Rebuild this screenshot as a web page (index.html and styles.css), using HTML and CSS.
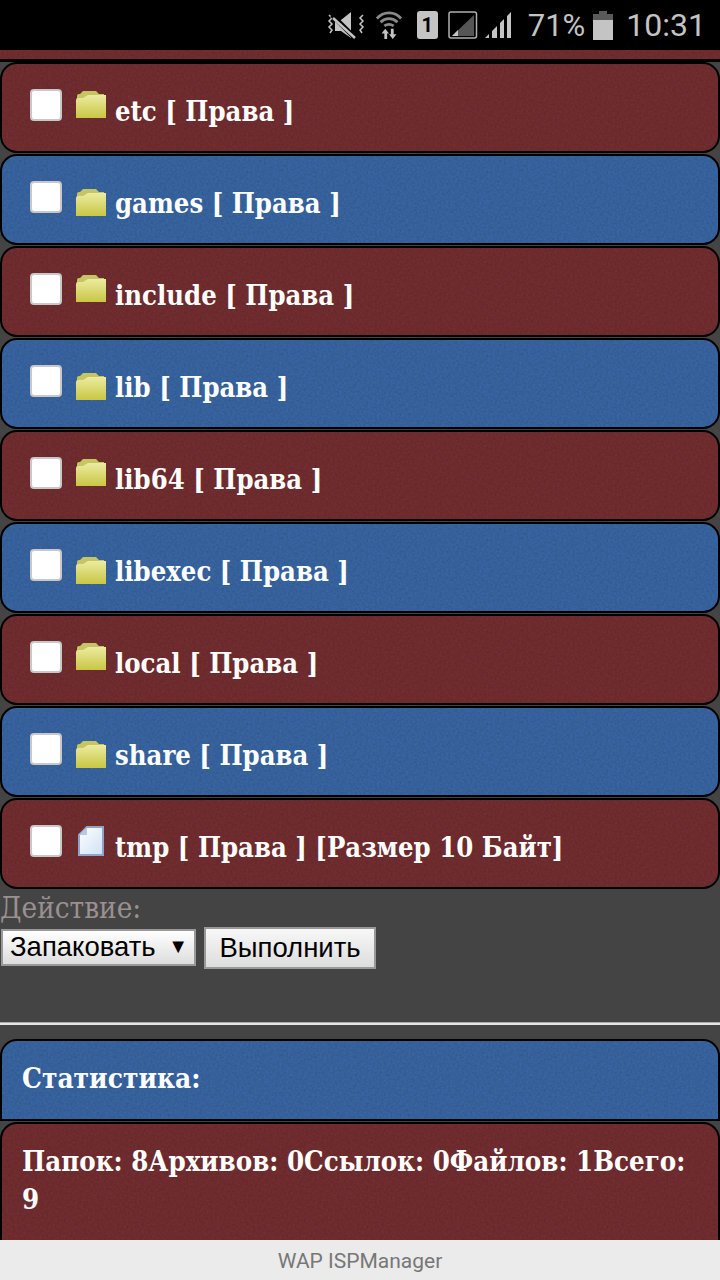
FILE: index.html
```html
<!DOCTYPE html>
<html lang="en">
<head>
    <meta charset="UTF-8">
    <meta name="viewport" content="width=device-width, initial-scale=1.0">
    <title>WAP ISPManager</title>
    <link rel="stylesheet" href="styles.css">
</head>
<body>
    <div class="status-bar">
        <svg class="st-icon" width="40" height="32" viewBox="0 0 40 32" fill="none" stroke="#c4c4c4">
            <path d="M3 6l3 3-3 3 3 3-3 3 3 3-2 3" stroke-width="1.5"/>
            <path d="M37 6l-3 3 3 3-3 3 3 3-3 3 2 3" stroke-width="1.5"/>
            <path d="M9 11h6l10-8v26l-10-7H9z" fill="#c4c4c4" stroke="none"/>
            <path d="M6 6l24 24" stroke="#000" stroke-width="5"/>
            <path d="M7 9l22 20" stroke-width="2.5"/>
        </svg>
        <svg class="st-icon st-wifi" width="28" height="32" viewBox="0 0 30 32" fill="none" stroke="#8a8a8a" stroke-width="3">
            <path d="M2 9c7-8 19-8 26 0"/>
            <path d="M6 13c5-5 13-5 18 0"/>
            <path d="M10 17c3-2 7-2 10 0"/>
            <path d="M11 20l-4 5h3v6h3v-6h2zM19 31l4-5h-3v-6h-3v6h-2z" fill="#c4c4c4" stroke="none"/>
        </svg>
        <div class="sim">1</div>
        <svg class="st-icon st-net" width="30" height="28" viewBox="0 0 30 28">
            <rect x="1" y="1" width="27.500" height="26" rx="2" fill="none" stroke="#b0b0b0" stroke-width="1.500"/>
            <path d="M26 4v21H4z" fill="#555"/>
            <path d="M10 19v6H4z" fill="#c4c4c4"/>
        </svg>
        <svg class="st-icon st-bars" width="28" height="28" viewBox="0 0 28 28" fill="#c4c4c4">
            <path d="M1 27l4-4v4zM8 27v-7l5-5v12zM16 27V12l4-4v19zM23 27V5l4-4v26z"/>
        </svg>
        <span class="st-pct">71%</span>
        <svg class="st-icon st-batt" width="20" height="29" viewBox="0 0 20 29">
            <path d="M6 0h8v3h6v26H0V3h6z" fill="#5a5a5a"/>
            <rect y="9" width="20" height="20" fill="#c4c4c4"/>
        </svg>
        <span class="st-time">10:31</span>
    </div>

    <div class="content">
        <div class="row row-red row-cut"></div>

        <div class="row row-red">
            <input type="checkbox" class="check">
            <svg class="ico" width="30" height="27" viewBox="0 0 30 27"><use href="#folder"/></svg>
            <span class="name">etc [ Права ]</span>
        </div>
        <div class="row row-blue">
            <input type="checkbox" class="check">
            <svg class="ico" width="30" height="27" viewBox="0 0 30 27"><use href="#folder"/></svg>
            <span class="name">games [ Права ]</span>
        </div>
        <div class="row row-red">
            <input type="checkbox" class="check">
            <svg class="ico" width="30" height="27" viewBox="0 0 30 27"><use href="#folder"/></svg>
            <span class="name">include [ Права ]</span>
        </div>
        <div class="row row-blue">
            <input type="checkbox" class="check">
            <svg class="ico" width="30" height="27" viewBox="0 0 30 27"><use href="#folder"/></svg>
            <span class="name">lib [ Права ]</span>
        </div>
        <div class="row row-red">
            <input type="checkbox" class="check">
            <svg class="ico" width="30" height="27" viewBox="0 0 30 27"><use href="#folder"/></svg>
            <span class="name">lib64 [ Права ]</span>
        </div>
        <div class="row row-blue">
            <input type="checkbox" class="check">
            <svg class="ico" width="30" height="27" viewBox="0 0 30 27"><use href="#folder"/></svg>
            <span class="name">libexec [ Права ]</span>
        </div>
        <div class="row row-red">
            <input type="checkbox" class="check">
            <svg class="ico" width="30" height="27" viewBox="0 0 30 27"><use href="#folder"/></svg>
            <span class="name">local [ Права ]</span>
        </div>
        <div class="row row-blue">
            <input type="checkbox" class="check">
            <svg class="ico" width="30" height="27" viewBox="0 0 30 27"><use href="#folder"/></svg>
            <span class="name">share [ Права ]</span>
        </div>
        <div class="row row-red">
            <input type="checkbox" class="check">
            <svg class="ico ico-file" width="30" height="32" viewBox="0 0 30 32">
                <path d="M11 2h16v28H3V10z" fill="url(#fileFill)" stroke="#8fa3cc" stroke-width="2"/>
                <path d="M11 2v8H3z" fill="#b9c9e4"/>
            </svg>
            <span class="name">tmp [ Права ] [Размер 10 Байт]</span>
        </div>

        <div class="action">
            <div class="action-label">Действие:</div>
            <div class="action-form">
                <div class="select">Запаковать <span class="arrow">▼</span></div>
                <button class="btn">Выполнить</button>
            </div>
        </div>

        <div class="divider"></div>

        <div class="row row-blue row-head">
            <span class="name">Статистика:</span>
        </div>
        <div class="row row-red row-stats">
            <span class="name">Папок: 8Архивов: 0Ссылок: 0Файлов: 1Всего: 9</span>
        </div>
    </div>

    <div class="footer">WAP ISPManager</div>

    <svg class="defs" width="0" height="0">
        <defs>
            <linearGradient id="folderFill" x1="0" y1="0" x2="0" y2="1">
                <stop offset="0" stop-color="#ecebA0"/>
                <stop offset="1" stop-color="#c8c743"/>
            </linearGradient>
            <linearGradient id="fileFill" x1="0" y1="0" x2="1" y2="1">
                <stop offset="0" stop-color="#ffffff"/>
                <stop offset="1" stop-color="#cfe0f5"/>
            </linearGradient>
            <g id="folder">
                <path d="M1 5q0-2 2-2h1l3-3h13l3 3h5v6H1z" fill="#c7c562"/>
                <path d="M0 27V9q0-2 2-2h5l5-3h18v23z" fill="url(#folderFill)"/>
            </g>
        </defs>
    </svg>
</body>
</html>
```

FILE: styles.css
```css
* { margin: 0; padding: 0; box-sizing: border-box; }
body {
    font-family: 'DejaVu Serif Condensed', 'DejaVu Serif', serif;
    font-stretch: condensed;
    background: #444;
    width: 720px;
    height: 1280px;
    overflow: hidden;
    position: relative;
}
.status-bar {
    height: 50px;
    background: #000;
    color: #c4c4c4;
    display: flex;
    align-items: center;
    justify-content: flex-end;
    padding-right: 14px;
    font-family: 'Roboto', sans-serif;
    font-stretch: normal;
}
.st-icon { margin-right: 9px; flex: none; }
.st-wifi { margin-right: 14px; }
.st-net { margin-right: 6px; }
.st-bars { margin-right: 16px; }
.st-batt { margin-right: 13px; }
.sim {
    width: 21px; height: 28px;
    margin-right: 10px;
    background: #c4c4c4; color: #000;
    border-radius: 3px;
    font-size: 20px; font-weight: bold;
    text-align: center; line-height: 28px;
}
.st-pct { font-size: 31px; margin-right: 8px; }
.st-time { font-size: 32px; }

.row {
    height: 91px;
    margin-bottom: 1px;
    border: 2px solid #000;
    border-radius: 17px;
    display: flex;
    align-items: flex-start;
    padding: 25px 0 0 28px;
    color: #fff;
    background-size: 240px 240px;
}
.row-red {
    background-color: #793033;
    background-image: url("data:image/svg+xml,%3Csvg xmlns='http://www.w3.org/2000/svg' width='240' height='240'%3E%3Cfilter id='n'%3E%3CfeTurbulence type='fractalNoise' baseFrequency='.45' numOctaves='2'/%3E%3CfeColorMatrix values='0 0 0 0 0 0 0 0 0 0 0 0 0 0 0 0 0 0 .2 0'/%3E%3C/filter%3E%3Crect width='240' height='240' filter='url(%23n)'/%3E%3C/svg%3E");
}
.row-blue {
    background-color: #3b6bac;
    background-image: url("data:image/svg+xml,%3Csvg xmlns='http://www.w3.org/2000/svg' width='240' height='240'%3E%3Cfilter id='n'%3E%3CfeTurbulence type='fractalNoise' baseFrequency='.45' numOctaves='2'/%3E%3CfeColorMatrix values='0 0 0 0 0 0 0 0 0 0 0 0 0 0 0 0 0 0 .2 0'/%3E%3C/filter%3E%3Crect width='240' height='240' filter='url(%23n)'/%3E%3C/svg%3E");
}
.row-cut {
    height: 12px;
    margin-bottom: 0;
    padding: 0;
    border-width: 0 0 3px;
    border-radius: 0;
}
.check {
    appearance: none;
    width: 32px; height: 32px;
    flex: none;
    background: #fff;
    border: 2px solid #c8c8c8;
    border-radius: 4px;
}
.ico { margin: 2px 0 0 14px; flex: none; }
.row-blue .ico { margin-top: 8px; }
.ico-file { margin-top: 0; }
.name {
    margin: 4px 0 0 9px;
    font-size: 27.2px;
    line-height: 36px;
    font-weight: bold;
    white-space: nowrap;
}

.action { height: 132px; }
.action-label {
    font-size: 29.4px;
    line-height: 36px;
    color: #9a9090;
}
.action-form { display: flex; align-items: center; margin-top: 1px; padding-left: 1px; }
.select {
    width: 195px; height: 37px;
    margin-bottom: 1px;
    padding-left: 7px;
    font-family: 'Liberation Sans', sans-serif;
    font-stretch: normal;
    font-size: 27.5px;
    line-height: 31px;
    color: #000;
    background: linear-gradient(#fff, #ddd);
    border: 2px solid #999;
    white-space: nowrap;
}
.arrow { font-size: 20px; margin-left: 5px; vertical-align: 3px; }
.btn {
    width: 172px; height: 42px;
    margin-left: 8px;
    font-family: 'Liberation Sans', sans-serif;
    font-stretch: normal;
    font-size: 27.5px;
    color: #000;
    background: linear-gradient(#f8f8f8, #ddd);
    border: 2px solid #999;
}
.divider {
    height: 3px;
    border-top: 1px solid #aaa;
    background: #e6e6e6;
    margin-bottom: 14px;
}
.row-head {
    height: 82px;
    border-radius: 17px 17px 0 0;
    padding: 20px 0 0 20px;
}
.row-head .name { margin: 0; font-size: 27.8px; }
.row-stats {
    height: 130px;
    border-radius: 17px 17px 0 0;
    padding: 18px 20px 0;
}
.row-stats .name { margin: 0; font-size: 27.4px; white-space: normal; line-height: 38px; }

.footer {
    position: absolute;
    left: 0; right: 0; bottom: 0;
    height: 40px;
    background: #ebebeb;
    color: #777;
    font-family: 'Roboto', sans-serif;
    font-stretch: normal;
    font-size: 21px;
    line-height: 42px;
    text-align: center;
}
.defs { position: absolute; }
```
